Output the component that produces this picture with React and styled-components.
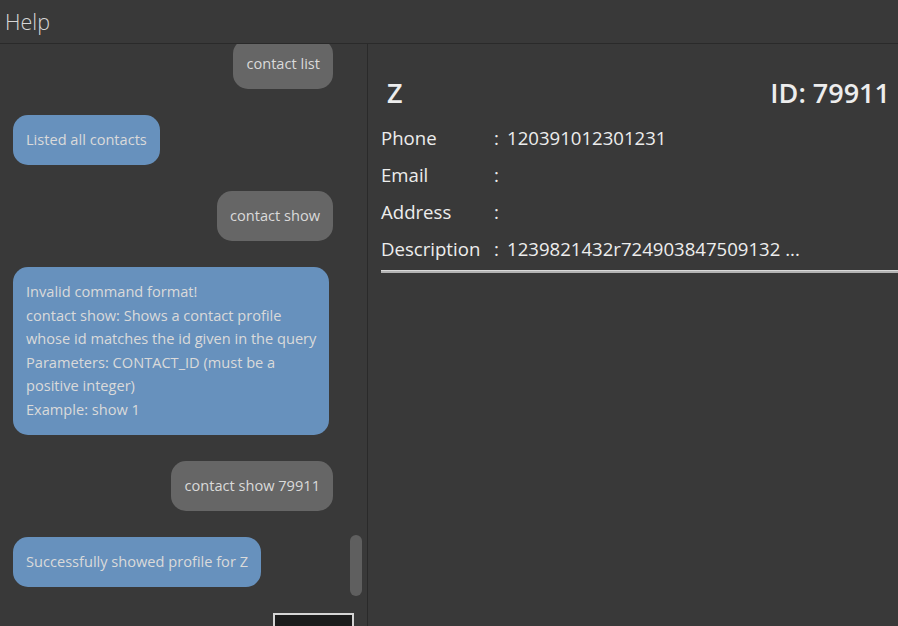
import React from 'react';
import styled, {createGlobalStyle} from 'styled-components';

const GlobalStyle = createGlobalStyle`
  html, body {
    margin: 0;
    padding: 0;
    background: #393939;
    font-family: "Open Sans", "Noto Sans", sans-serif;
  }
`;

const messages = [
    {from: 'user', text: 'contact list'},
    {from: 'bot', text: 'Listed all contacts'},
    {from: 'user', text: 'contact show'},
    {
        from: 'bot',
        text: 'Invalid command format!\ncontact show: Shows a contact profile\nwhose id matches the id given in the query\nParameters: CONTACT_ID (must be a\npositive integer)\nExample: show 1'
    },
    {from: 'user', text: 'contact show 79911'},
    {from: 'bot', text: 'Successfully showed profile for Z'},
];

const fields = [
    {label: 'Phone', value: '120391012301231'},
    {label: 'Email', value: ''},
    {label: 'Address', value: ''},
    {label: 'Description', value: '1239821432r724903847509132 ...'},
];

const App = () => {
    return <Window>
        <GlobalStyle/>
        <MenuBar>
            <MenuItem>Help</MenuItem>
        </MenuBar>

        <Body>
            <ChatPanel>
                <ChatList>
                    {messages.map((m, i) => <Bubble key={i} $user={m.from === 'user'}>{m.text}</Bubble>)}
                    <ResultBox/>
                </ChatList>
                <ScrollThumb/>
            </ChatPanel>

            <ProfilePanel>
                <ProfileHeader>
                    <Name>Z</Name>
                    <ContactId>ID: 79911</ContactId>
                </ProfileHeader>
                {fields.map(f => <FieldRow key={f.label}>
                    <FieldLabel>{f.label}</FieldLabel>
                    <FieldColon>:</FieldColon>
                    <FieldValue>{f.value}</FieldValue>
                </FieldRow>)}
                <Rule/>
            </ProfilePanel>
        </Body>
    </Window>;
}

const Window = styled.div`
  height: 100vh;
  display: flex;
  flex-direction: column;
  overflow: hidden;
  background: #393939;
`

const MenuBar = styled.div`
  height: 43px;
  flex-shrink: 0;
  display: flex;
  align-items: center;
  border-bottom: 1px solid #2a2a2a;
`

const MenuItem = styled.span`
  padding-left: 5px;
  font-size: 21.5px;
  font-weight: 300;
  color: #d6d6d6;
`

const Body = styled.div`
  flex: 1;
  min-height: 0;
  display: flex;
`

const ChatPanel = styled.div`
  position: relative;
  width: 367px;
  flex-shrink: 0;
  overflow: hidden;
  border-right: 1px solid #2a2a2a;
`

const ChatList = styled.div`
  display: flex;
  flex-direction: column;
  align-items: flex-start;
  gap: 26px;
  margin-top: -5px;
  padding: 0 13px;
`

const Bubble = styled.div`
  align-self: ${p => p.$user ? 'flex-end' : 'flex-start'};
  margin-right: ${p => p.$user ? '21px' : '0'};
  background: ${p => p.$user ? '#666666' : '#6791bd'};
  color: #dadada;
  border-radius: 15px;
  padding: 13.2px 13px;
  font-size: 14.6px;
  line-height: 23.6px;
  white-space: pre-line;
`

const ResultBox = styled.div`
  align-self: flex-end;
  width: 77px;
  height: 40px;
  background: #1b1b1b;
  border: 2px solid #d4d4d4;
`

const ScrollThumb = styled.div`
  position: absolute;
  right: 5px;
  top: 491px;
  width: 12px;
  height: 61px;
  border-radius: 6px;
  background: #5f5f5f;
`

const ProfilePanel = styled.div`
  flex: 1;
  padding: 30px 0 0 13px;
  color: #ededed;
`

const ProfileHeader = styled.div`
  display: flex;
  justify-content: space-between;
  align-items: center;
  height: 36px;
  margin-bottom: 9px;
`

const Name = styled.span`
  padding-left: 6px;
  font-size: 27px;
  font-weight: 600;
`

const ContactId = styled.span`
  padding-right: 8px;
  font-size: 27px;
  font-weight: 600;
`

const FieldRow = styled.div`
  display: flex;
  height: 37px;
  align-items: center;
  font-size: 18.6px;
`

const FieldLabel = styled.span`
  width: 113px;
`

const FieldColon = styled.span`
  width: 13px;
`

const FieldValue = styled.span``

const Rule = styled.div`
  margin-top: 3px;
  height: 2px;
  background: #b3b3b3;
  border-top: 1px solid #d9d9d9;
`

export default App;
